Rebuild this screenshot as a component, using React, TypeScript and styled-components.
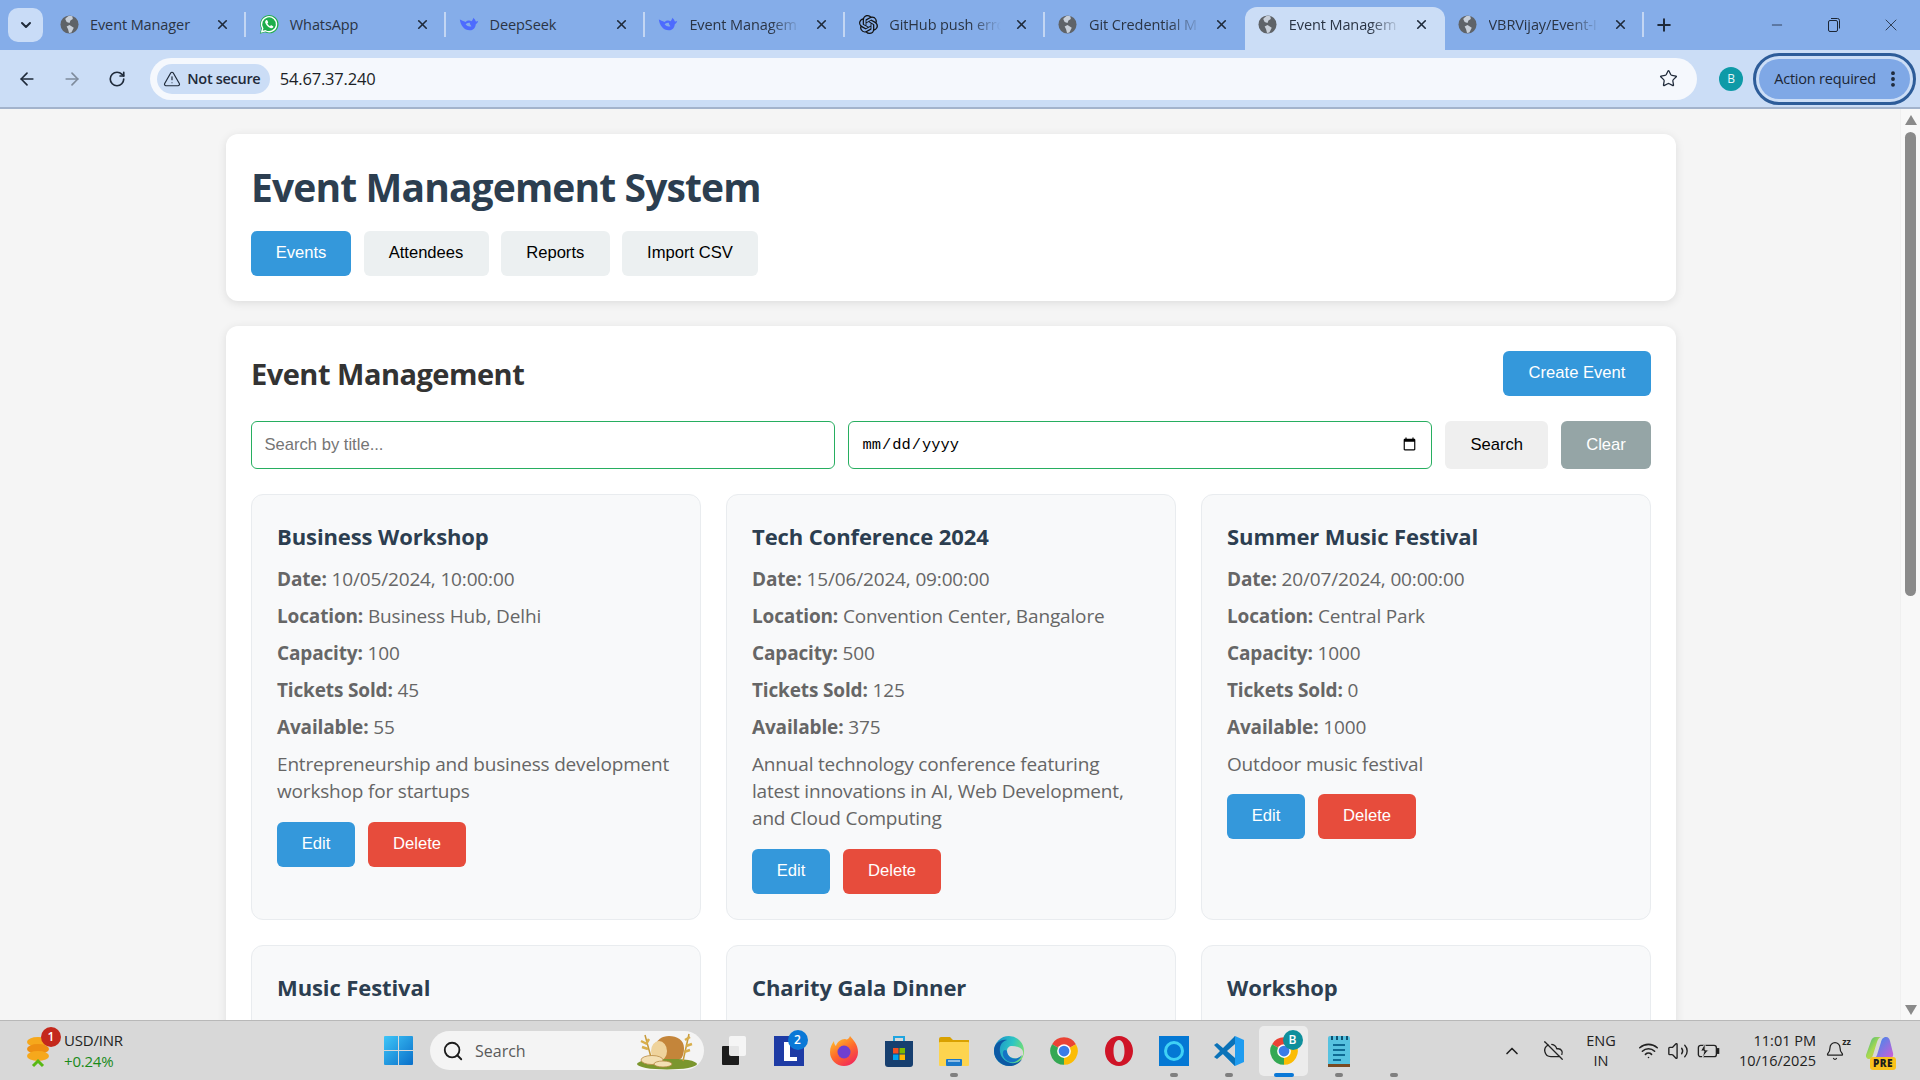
import React from "react";
import styled, { createGlobalStyle } from "styled-components";
import {
  ArrowLeft,
  ArrowRight,
  RotateCw,
  Star,
  TriangleAlert,
  ChevronDown,
  ChevronUp,
  X,
  Plus,
  Minus,
  Search as SearchGlyph,
  EllipsisVertical,
  CloudOff,
  Wifi,
  Volume2,
  Bell,
} from "lucide-react";
import { SiOpenai } from "react-icons/si";

const Global = createGlobalStyle`
  html, body { margin: 0; height: 100%; overflow: hidden; }
  body { font-family: "Open Sans", "Noto Sans", sans-serif; background: #f5f5f5; }
  * { box-sizing: border-box; }
`;

const Screen = styled.div`
  width: 1920px;
  height: 1080px;
  display: flex;
  flex-direction: column;
  overflow: hidden;
`;

/* ---------- browser chrome ---------- */

const TabStrip = styled.div`
  height: 50px;
  flex: none;
  background: #85ade9;
  display: flex;
  align-items: flex-end;
  padding-left: 8px;
  color: #1f2a3a;
`;

const TabMenu = styled.div`
  width: 35px;
  height: 34px;
  margin-bottom: 8px;
  margin-right: 3px;
  border-radius: 10px;
  background: #c9dcf7;
  display: flex;
  align-items: center;
  justify-content: center;
`;

const Tab = styled.div<{ $active?: boolean; $sep?: boolean }>`
  position: relative;
  width: 199.8px;
  height: 43px;
  padding: 0 16px 8px 13px;
  display: flex;
  align-items: center;
  border-radius: 12px 12px 0 0;
  background: ${(p) => (p.$active ? "#cbddf6" : "transparent")};

  &::after {
    content: "";
    display: ${(p) => (p.$sep ? "block" : "none")};
    position: absolute;
    right: 0;
    top: 5px;
    width: 2px;
    height: 25px;
    background: #c3d6f3;
  }
`;

const TabIcon = styled.span`
  width: 20px;
  height: 20px;
  flex: none;
  display: flex;
  align-items: center;
  justify-content: center;
`;

const TabTitle = styled.span<{ $fade?: boolean }>`
  flex: 1;
  min-width: 0;
  margin: 0 13px 0 11px;
  font-size: 14.5px;
  letter-spacing: -0.1px;
  white-space: nowrap;
  color: #2a3444;
  ${(p) =>
    p.$fade &&
    `-webkit-mask-image: linear-gradient(to right, #000 72%, transparent 100%);`}
`;

const NewTab = styled.div`
  width: 40px;
  height: 34px;
  margin-bottom: 8px;
  display: flex;
  align-items: center;
  justify-content: center;
`;

const WindowControls = styled.div`
  margin-left: auto;
  margin-right: 1px;
  height: 42px;
  display: flex;
  align-self: flex-start;
  margin-top: 4px;
`;

const WindowButton = styled.div`
  width: 57px;
  display: flex;
  align-items: center;
  justify-content: center;
`;

const Toolbar = styled.div`
  height: 59px;
  flex: none;
  background: #cbddf6;
  border-bottom: 2px solid #a3b3cc;
  display: flex;
  align-items: center;
  padding: 0 4px 0 5px;
  color: #1f2a3a;
`;

const NavButton = styled.div`
  width: 45px;
  height: 36px;
  display: flex;
  align-items: center;
  justify-content: center;
`;

const Omnibox = styled.div`
  width: 1549px;
  height: 42px;
  margin-left: 10px;
  border-radius: 21px;
  background: #f5f8fd;
  display: flex;
  align-items: center;
  padding: 0 19px 0 7px;
`;

const SecurityChip = styled.div`
  height: 30px;
  width: 113px;
  border-radius: 15px;
  background: #cbddf6;
  display: flex;
  align-items: center;
  justify-content: center;
  gap: 6px;
  padding-right: 3px;
  font-size: 14.5px;
  font-weight: 600;
  letter-spacing: -0.3px;
  color: #1f2a3a;
`;

const Url = styled.span`
  margin-left: 10px;
  flex: 1;
  font-size: 16.5px;
  letter-spacing: -0.2px;
  color: #1b1f27;
`;

const Avatar = styled.div`
  width: 24px;
  height: 24px;
  margin-left: 22px;
  border-radius: 50%;
  background: #0e9aa7;
  color: #e8f6f7;
  font-size: 12px;
  display: flex;
  align-items: center;
  justify-content: center;
`;

const ActionPill = styled.div`
  width: 163px;
  height: 52px;
  margin-left: 10px;
  border: 3px solid #2d5c99;
  border-radius: 26px;
  padding: 3px;
  background: #cbddf6;
`;

const ActionInner = styled.div`
  height: 100%;
  border-radius: 20px;
  background: #7fa8e6;
  display: flex;
  align-items: center;
  justify-content: space-between;
  padding: 0 7px 0 15px;
  font-size: 14.5px;
  letter-spacing: -0.2px;
  color: #1c2635;
`;

/* ---------- page ---------- */

const Viewport = styled.div`
  flex: 1;
  min-height: 0;
  display: flex;
`;

const Page = styled.main`
  flex: 1;
  min-width: 0;
  overflow: hidden;
  background: #f5f5f5;
  padding: 25px 0 0 2px;
`;

const Container = styled.div`
  width: 1450px;
  margin: 0 auto;
  display: flex;
  flex-direction: column;
  gap: 25px;
`;

const Panel = styled.section`
  background: #fff;
  border-radius: 12px;
  padding: 25px;
  box-shadow: 0 2px 10px rgba(0, 0, 0, 0.1);
`;

const Title = styled.h1`
  margin: 0 0 16px;
  font-size: 39px;
  line-height: 56px;
  font-weight: 700;
  letter-spacing: -0.87px;
  color: #2c3e50;
`;

const Nav = styled.nav`
  display: flex;
  gap: 12.5px;
`;

const Button = styled.button<{
  $kind?: "primary" | "danger" | "muted" | "plain" | "soft";
  $w: number;
  $tall?: boolean;
}>`
  width: ${(p) => p.$w}px;
  height: ${(p) => (p.$tall ? "48px" : "45px")};
  flex: none;
  padding: 0 0 1px;
  border: none;
  border-radius: 6px;
  font-family: "Liberation Sans", Arial, sans-serif;
  font-size: 16.6px;
  cursor: pointer;
  color: ${(p) => (p.$kind === "plain" || p.$kind === "soft" ? "#000" : "#fff")};
  background: ${(p) =>
    p.$kind === "primary"
      ? "#3498db"
      : p.$kind === "danger"
        ? "#e74c3c"
        : p.$kind === "muted"
          ? "#95a5a6"
          : p.$kind === "soft"
            ? "#efefef"
            : "#ecf0f1"};
`;

const SectionHead = styled.div`
  display: flex;
  align-items: center;
  justify-content: space-between;
  margin-bottom: 25px;
`;

const SectionTitle = styled.h2`
  margin: 0;
  font-size: 29px;
  font-weight: 700;
  letter-spacing: -0.5px;
  color: #333;
`;

const FilterRow = styled.div`
  display: flex;
  gap: 12.8px;
  margin-bottom: 25px;
`;

const Field = styled.input`
  flex: 1;
  min-width: 0;
  height: 48px;
  padding: 0 12.5px;
  border: 1px solid #27ae60;
  border-radius: 6px;
  background: #fff;
  font-family: "Liberation Sans", Arial, sans-serif;
  font-size: 16.6px;
  outline: none;
  &::placeholder {
    color: #757575;
  }
  &[type="date"] {
    font-family: "Liberation Mono", monospace;
    font-size: 15.4px;
    color: #000;
  }
`;

const Grid = styled.div`
  display: grid;
  grid-template-columns: repeat(3, 450px);
  gap: 25px;
`;

const Card = styled.article`
  min-height: 425px;
  padding: 25px;
  background: #f8f9fa;
  border: 1px solid #e9ecef;
  border-radius: 12px;
  line-height: 27.2px;
  font-size: 19px;
  color: #666;
`;

const CardTitle = styled.h3`
  margin: 0 0 12.6px;
  font-size: 22px;
  line-height: 33.2px;
  font-weight: 700;
  letter-spacing: -0.1px;
  color: #2c3e50;
`;

const Line = styled.p`
  margin: 0 0 9.75px;
  letter-spacing: -0.15px;
  strong {
    font-weight: 700;
  }
`;

const Description = styled.p`
  margin: 0 0 16.6px;
  letter-spacing: -0.18px;
`;

const Actions = styled.div`
  display: flex;
  gap: 13px;
`;

const ScrollBar = styled.div`
  width: 20px;
  flex: none;
  background: #f8f8f8;
  border-left: 1px solid #f0f0f0;
  display: flex;
  flex-direction: column;
  align-items: center;
  position: relative;
`;

const ScrollArrow = styled.div<{ $down?: boolean }>`
  position: absolute;
  ${(p) => (p.$down ? "bottom: 5px;" : "top: 6px;")}
  width: 0;
  height: 0;
  border-left: 6px solid transparent;
  border-right: 6px solid transparent;
  ${(p) => (p.$down ? "border-top: 10px solid #8a8a8a;" : "border-bottom: 10px solid #8a8a8a;")}
`;

const ScrollThumb = styled.div`
  position: absolute;
  top: 23px;
  width: 11px;
  height: 464px;
  border-radius: 6px;
  background: #8a8a8a;
`;

/* ---------- taskbar ---------- */

const Taskbar = styled.footer`
  height: 60px;
  flex: none;
  background: #d8d8d8;
  border-top: 1px solid #b8b8b8;
  display: flex;
  align-items: center;
  position: relative;
`;

const Widget = styled.div`
  width: 371px;
  flex: none;
  padding-left: 25px;
  display: flex;
  align-items: center;
  gap: 3px;
`;

const CoinBox = styled.div`
  position: relative;
  width: 36px;
  height: 40px;
`;

const Badge = styled.span<{ $color: string }>`
  position: absolute;
  top: -4px;
  right: 0;
  width: 20px;
  height: 20px;
  border-radius: 50%;
  background: ${(p) => p.$color};
  color: #fff;
  font-size: 12px;
  font-weight: 600;
  display: flex;
  align-items: center;
  justify-content: center;
`;

const TaskBadge = styled(Badge)`
  right: -4px;
  top: -6px;
`;

const WidgetText = styled.div`
  font-size: 15px;
  line-height: 21px;
  color: #222;
  letter-spacing: -0.2px;
`;

const WidgetDelta = styled.div`
  color: #1a8a1a;
`;

const TaskSlot = styled.div<{ $active?: boolean; $running?: boolean }>`
  position: relative;
  width: 55px;
  height: 50px;
  flex: none;
  display: flex;
  align-items: center;
  justify-content: center;

  ${(p) =>
    p.$active &&
    `&::before {
      content: "";
      position: absolute;
      left: 3px;
      right: 3px;
      top: 0;
      bottom: 0;
      border-radius: 5px;
      background: #ececec;
    }`}

  &::after {
    content: "";
    display: ${(p) => (p.$running || p.$active ? "block" : "none")};
    position: absolute;
    bottom: -1px;
    left: 50%;
    transform: translateX(-50%);
    width: ${(p) => (p.$active ? "20px" : "8px")};
    height: 4px;
    border-radius: 2px;
    background: ${(p) => (p.$active ? "#0a78d7" : "#7f7f7f")};
  }

  > * {
    position: relative;
  }
`;

const SearchPill = styled.div`
  width: 274px;
  height: 39px;
  margin: 0 2px 0 4px;
  flex: none;
  border-radius: 20px;
  background: #f4f4f4;
  display: flex;
  align-items: center;
  padding: 0 6px 0 12px;
  font-size: 16px;
  color: #5a5a5a;
  gap: 11px;
`;

const SearchLabel = styled.span`
  flex: 1;
`;

const Tray = styled.div`
  position: absolute;
  right: 12px;
  top: 0;
  bottom: 0;
  width: 420px;
  display: flex;
  align-items: center;
  color: #222;
`;

const TraySlot = styled.div<{ $w: number }>`
  width: ${(p) => p.$w}px;
  flex: none;
  display: flex;
  align-items: center;
  justify-content: center;
  text-align: center;
`;

const TrayText = styled.div<{ $right?: boolean }>`
  font-size: 14.5px;
  line-height: 20px;
  text-align: ${(p) => (p.$right ? "right" : "center")};
  color: #222;
  width: 100%;
`;

/* ---------- drawn icons ---------- */

const Globe = () => (
  <svg width="19" height="19" viewBox="0 0 20 20">
    <circle cx="10" cy="10" r="9.5" fill="#5f6368" />
    <path d="M10 .8c-2 .7-3.500 2-4.500 3.500l1.500 3 3 1 1-2.500 2.500-1.500-.5-3A9 9 0 0 0 10 .8z" fill="#c8cfd9" />
    <path d="M10 10.500l-3 1.500 1.500 3 1 4 2.500-.5 2.500-5z" fill="#c8cfd9" />
  </svg>
);

const WhatsApp = () => (
  <svg width="21" height="21" viewBox="0 0 24 24">
    <path d="M1 23l1.700-6.200A11 11 0 1 1 7.200 21.300z" fill="#1fae4b" />
    <path d="M3.300 20.700l1.200-4.200A9 9 0 1 1 7.700 19.500z" fill="#1fae4b" stroke="#fff" strokeWidth="1.600" />
    <path d="M8.500 6.800c-1 .8-1.400 2-.9 3.400 1 2.700 3.400 5 6.100 6 1.400.5 2.700.1 3.400-1 .3-.5.2-1-.2-1.200l-2-1c-.4-.2-.8-.1-1 .2l-.6.800c-1.300-.5-2.700-1.900-3.300-3.200l.7-.7c.3-.3.4-.7.2-1L9.900 7c-.3-.5-.9-.5-1.400-.2z" fill="#fff" />
  </svg>
);

const Whale = () => (
  <svg width="22" height="17" viewBox="0 0 24 18">
    <path
      d="M1 3c2 1 4 2 7 3 2-2 5-2 7-1 1-1 2-2 2-4 1 1 2.500 2 3 4 1 .5 2 .5 3-.5 0 2.500-2 3.500-3 4.500 0 4-3 7-7 7C6 16 2 10 1 3z"
      fill="#4d6bfe"
    />
    <path d="M8 9c2 2 4 3 7 2-1-1-2-2-2-4-2-.5-4 .5-5 2z" fill="#85ade9" />
  </svg>
);

const Restore = () => (
  <svg width="14" height="16" viewBox="0 0 14 16" fill="none" stroke="#1c2635" strokeWidth="1">
    <rect x="1.500" y="3.500" width="9" height="11" rx="1.500" />
    <path d="M4 1.500h6.500a2 2 0 0 1 2 2v8" />
  </svg>
);

const Coins = () => (
  <svg width="32" height="38" viewBox="0 0 32 38">
    <ellipse cx="13" cy="11" rx="11" ry="5" fill="#f6a81c" />
    <ellipse cx="13" cy="18" rx="11" ry="5" fill="#ee8f12" />
    <ellipse cx="13" cy="25" rx="11" ry="5" fill="#f6a81c" />
    <path d="M8 35l5-5 5 5" fill="none" stroke="#58b814" strokeWidth="3" />
  </svg>
);

const WinLogo = () => (
  <svg width="29" height="29" viewBox="0 0 29 29">
    <defs>
      <linearGradient id="win" x1="0" y1="0" x2="1" y2="1">
        <stop offset="0" stopColor="#3ec6f8" />
        <stop offset="1" stopColor="#0a6fc9" />
      </linearGradient>
    </defs>
    <path d="M1 0h13v14H0V1a1 1 0 0 1 1-1zM15 0h13a1 1 0 0 1 1 1v13H15zM0 15h14v14H1a1 1 0 0 1-1-1zM15 15h14v13a1 1 0 0 1-1 1H15z" fill="url(#win)" />
  </svg>
);

const Bread = () => (
  <svg width="62" height="40" viewBox="0 0 62 40">
    <ellipse cx="31" cy="33" rx="30" ry="5.500" fill="#7b962e" />
    <path d="M9 4l7 26M53 3l-6 27" stroke="#c79a3a" strokeWidth="1.500" fill="none" />
    <path d="M5 10l6 3M6 16l6 2M13 8l-3 5M49 9l5-3M50 15l6-2M48 21l6-2" stroke="#d8ae4c" strokeWidth="2.500" fill="none" />
    <path d="M20 28V15c0-6 6-10 13-10 8 0 15 4 15 12 0 6-2 11-4 11z" fill="#c4853a" />
    <ellipse cx="23" cy="20" rx="8" ry="10" fill="#efd39c" />
    <ellipse cx="16" cy="29" rx="11" ry="4.500" fill="#f3dfb4" stroke="#b98a45" strokeWidth="0.800" />
    <ellipse cx="27" cy="33" rx="9" ry="3" fill="#f3dfb4" stroke="#b98a45" strokeWidth="0.800" />
  </svg>
);

const TaskView = () => (
  <svg width="24" height="29" viewBox="0 0 24 29">
    <rect x="0" y="10" width="17" height="19" rx="1" fill="#1c1c1c" />
    <rect x="7" y="0" width="17" height="20" rx="2" fill="#f7f7f7" opacity="0.92" />
  </svg>
);

const AppL = () => (
  <svg width="30" height="30" viewBox="0 0 30 30">
    <rect width="30" height="30" fill="#1e3ba5" />
    <path d="M10 6h6v15h7v4H10z" fill="#fff" />
  </svg>
);

const Firefox = () => (
  <svg width="30" height="32" viewBox="0 0 30 32">
    <defs>
      <linearGradient id="ff" x1="0.2" y1="0" x2="0.8" y2="1">
        <stop offset="0" stopColor="#ffc329" />
        <stop offset="0.5" stopColor="#ff6a2b" />
        <stop offset="1" stopColor="#f0245e" />
      </linearGradient>
    </defs>
    <path d="M21 1c3 4 8 8 8 16a14 14 0 0 1-28 0C1 12 3 9 5 6c0 3 1 4 2 5 1-4 5-7 9-7 2 1 4 0 5-3z" fill="url(#ff)" />
    <circle cx="15" cy="17" r="6.500" fill="#6f3fd0" />
  </svg>
);

const Store = () => (
  <svg width="28" height="32" viewBox="0 0 28 32">
    <path d="M9 6V2h10v4" fill="none" stroke="#1fa5e0" strokeWidth="2" />
    <path d="M0 6h28v23a3 3 0 0 1-3 3H3a3 3 0 0 1-3-3z" fill="#173f6f" />
    <rect x="8" y="13" width="5.500" height="5.500" fill="#f25022" />
    <rect x="14.500" y="13" width="5.500" height="5.500" fill="#7fba00" />
    <rect x="8" y="19.500" width="5.500" height="5.500" fill="#00a4ef" />
    <rect x="14.500" y="19.500" width="5.500" height="5.500" fill="#ffb900" />
  </svg>
);

const Folder = () => (
  <svg width="30" height="30" viewBox="0 0 30 30">
    <path d="M0 3a2 2 0 0 1 2-2h9l3 3h16v6H0z" fill="#d9a100" />
    <rect y="6" width="30" height="24" rx="1" fill="#fdd44f" />
    <rect x="7" y="23" width="16" height="7" rx="1" fill="#1b78c9" />
    <rect x="9" y="24" width="12" height="2" fill="#fff" opacity="0.5" />
  </svg>
);

const Edge = () => (
  <svg width="30" height="30" viewBox="0 0 30 30">
    <defs>
      <linearGradient id="edge" x1="0" y1="0.3" x2="1" y2="0.6">
        <stop offset="0" stopColor="#1a8fc9" />
        <stop offset="0.55" stopColor="#2cc5c4" />
        <stop offset="1" stopColor="#7ee06a" />
      </linearGradient>
    </defs>
    <circle cx="15" cy="15" r="15" fill="url(#edge)" />
    <path d="M0 15C0 7 7 3 13 4 8 5 5 10 6 16c1 7 8 12 15 11 3-.5 5-2 7-4-2 4-7 7-13 7C7 30 0 23 0 15z" fill="#0c59a4" />
    <path d="M29 19c-3 3-7 4-10 3-4-1-6-4-6-7 0-3 2-5 5-5 5 0 11 2 11 6z" fill="#d8d8d8" />
    <path d="M13 15c0 4 3 7 7 7.500 3 .4 6-1 8-3.500-2 5-7 8-12 7-5-1-8-6-7-10 .5-2 2-3 4-1z" fill="#1473c4" />
  </svg>
);

const Chrome = () => (
  <svg width="30" height="30" viewBox="0 0 24 24">
    <path d="M12 12L2.470 6.500A11 11 0 0 1 21.530 6.500z" fill="#ea4335" />
    <path d="M12 12L21.530 6.500A11 11 0 0 1 12 23z" fill="#fbbc04" />
    <path d="M12 12L12 23A11 11 0 0 1 2.470 6.500z" fill="#34a853" />
    <circle cx="12" cy="12" r="5.500" fill="#fff" />
    <circle cx="12" cy="12" r="4.300" fill="#3a7ce8" />
  </svg>
);

const Opera = () => (
  <svg width="30" height="32" viewBox="0 0 30 32">
    <path
      fillRule="evenodd"
      d="M15 1c8 0 14 6.700 14 15s-6 15-14 15S1 24.300 1 16 7 1 15 1zm0 4c-3.500 0-5.500 5-5.500 11s2 11 5.500 11 5.500-5 5.500-11S18.500 5 15 5z"
      fill="#cf1427"
    />
  </svg>
);

const Alexa = () => (
  <svg width="30" height="30" viewBox="0 0 30 30">
    <rect width="30" height="30" fill="#0478d4" />
    <circle cx="15" cy="15" r="8.500" fill="none" stroke="#3fd1f5" strokeWidth="3" />
  </svg>
);

const VsCode = () => (
  <svg width="30" height="30" viewBox="0 0 30 30">
    <path d="M21 0l9 4v22l-9 4-12-12 5-4z" fill="#1f9cf0" />
    <path d="M21 0v30L9 18 3 23 0 21l6-6-6-6 3-2 6 5z" fill="#0a72b8" />
    <path d="M21 8l-8 7 8 7z" fill="#d8d8d8" />
  </svg>
);

const Notepad = () => (
  <svg width="24" height="32" viewBox="0 0 24 32">
    <rect width="22" height="30" x="1" y="1" rx="2" fill="#56c2e0" />
    <rect x="1" y="29" width="22" height="3" fill="#7a4a22" />
    <path d="M6 10h12M6 15h12M6 20h12M6 25h8" stroke="#0f6b94" strokeWidth="2" />
    <path d="M5 1v4M10 1v4M15 1v4M20 1v4" stroke="#10506f" strokeWidth="2" />
  </svg>
);

const Battery = () => (
  <svg width="23" height="18" viewBox="0 0 20 16" fill="none" stroke="#222" strokeWidth="1.200">
    <rect x="1" y="3" width="16" height="10" rx="2" />
    <rect x="17.500" y="6" width="1.500" height="4" fill="#222" />
    <path d="M7 1L3 8h3l-1.500 6L10 7H7z" fill="#222" stroke="#d8d8d8" strokeWidth="0.800" />
  </svg>
);

const Copilot = () => (
  <svg width="30" height="27" viewBox="0 0 30 27">
    <defs>
      <linearGradient id="copA" x1="0" y1="0" x2="1" y2="1">
        <stop offset="0" stopColor="#38b48a" />
        <stop offset="0.5" stopColor="#a8d94f" />
        <stop offset="1" stopColor="#f5b43a" />
      </linearGradient>
      <linearGradient id="copB" x1="0" y1="0" x2="1" y2="1">
        <stop offset="0" stopColor="#2e8ff0" />
        <stop offset="1" stopColor="#d45cd4" />
      </linearGradient>
    </defs>
    <path d="M2 20L7 6c.7-2 2-4 5-4h6c-3 0-4 2-5 5l-4 13c-.7 2.500-2.500 4-4 4-2 0-3.500-2-3-4z" fill="url(#copA)" />
    <path d="M10 24c-1 0 2-1 3-4l4-13c.7-2.500 2-5 5-5 2.500 0 3.500 2 4 4l3 12c.7 3-1 6-4 6z" fill="url(#copB)" />
  </svg>
);

const PreBadge = styled.span`
  position: absolute;
  left: 6px;
  bottom: -3px;
  padding: 0 3px;
  height: 13px;
  border-radius: 3px;
  background: #f9c21c;
  color: #1c1c1c;
  font-size: 10px;
  font-weight: 800;
  line-height: 13px;
  letter-spacing: 0.5px;
`;

const CopilotBox = styled.div`
  position: relative;
  width: 30px;
  height: 32px;
`;

const IconBadgeHolder = styled.div`
  position: relative;
  display: flex;
`;

const SnoozeMark = styled.span`
  position: absolute;
  top: -6px;
  right: -6px;
  font-size: 9px;
  font-weight: 700;
`;

/* ---------- data ---------- */

const tabs = [
  { title: "Event Manager", icon: <Globe />, sep: true },
  { title: "WhatsApp", icon: <WhatsApp />, sep: true },
  { title: "DeepSeek", icon: <Whale />, sep: true },
  { title: "Event Managem", icon: <Whale />, sep: true, fade: true },
  { title: "GitHub push erro", icon: <SiOpenai size={19} color="#111" />, sep: true, fade: true },
  { title: "Git Credential M", icon: <Globe />, fade: true },
  { title: "Event Managem", icon: <Globe />, active: true, fade: true },
  { title: "VBRVijay/Event-I", icon: <Globe />, sep: true, fade: true },
];

const firstRow = [
  {
    title: "Business Workshop",
    date: "10/05/2024, 10:00:00",
    location: "Business Hub, Delhi",
    capacity: 100,
    sold: 45,
    available: 55,
    description: "Entrepreneurship and business development workshop for startups",
  },
  {
    title: "Tech Conference 2024",
    date: "15/06/2024, 09:00:00",
    location: "Convention Center, Bangalore",
    capacity: 500,
    sold: 125,
    available: 375,
    description: "Annual technology conference featuring latest innovations in AI, Web Development, and Cloud Computing",
  },
  {
    title: "Summer Music Festival",
    date: "20/07/2024, 00:00:00",
    location: "Central Park",
    capacity: 1000,
    sold: 0,
    available: 1000,
    description: "Outdoor music festival",
  },
];

const secondRow = ["Music Festival", "Charity Gala Dinner", "Workshop"];

export default function App() {
  return (
    <Screen>
      <Global />
      <TabStrip>
        <TabMenu>
          <ChevronDown size={16} strokeWidth={3} />
        </TabMenu>
        {tabs.map((t, i) => (
          <Tab key={i} $active={t.active} $sep={t.sep}>
            <TabIcon>{t.icon}</TabIcon>
            <TabTitle $fade={t.fade}>{t.title}</TabTitle>
            <X size={15} strokeWidth={2.6} />
          </Tab>
        ))}
        <NewTab>
          <Plus size={20} strokeWidth={2.4} />
        </NewTab>
        <WindowControls>
          <WindowButton>
            <Minus size={16} strokeWidth={1.2} />
          </WindowButton>
          <WindowButton>
            <Restore />
          </WindowButton>
          <WindowButton>
            <X size={20} strokeWidth={1} />
          </WindowButton>
        </WindowControls>
      </TabStrip>

      <Toolbar>
        <NavButton>
          <ArrowLeft size={20} strokeWidth={2} />
        </NavButton>
        <NavButton>
          <ArrowRight size={20} strokeWidth={2} color="#7f8b9c" />
        </NavButton>
        <NavButton>
          <RotateCw size={18} strokeWidth={2.2} />
        </NavButton>
        <Omnibox>
          <SecurityChip>
            <TriangleAlert size={18} strokeWidth={1.6} />
            Not secure
          </SecurityChip>
          <Url>54.67.37.240</Url>
          <Star size={19} strokeWidth={1.6} />
        </Omnibox>
        <Avatar>B</Avatar>
        <ActionPill>
          <ActionInner>
            Action required
            <EllipsisVertical size={20} strokeWidth={2.6} />
          </ActionInner>
        </ActionPill>
      </Toolbar>

      <Viewport>
        <Page>
          <Container>
            <Panel>
              <Title>Event Management System</Title>
              <Nav>
                <Button $kind="primary" $w={100}>Events</Button>
                <Button $kind="plain" $w={125}>Attendees</Button>
                <Button $kind="plain" $w={108.5}>Reports</Button>
                <Button $kind="plain" $w={136}>Import CSV</Button>
              </Nav>
            </Panel>
            <Panel>
              <SectionHead>
                <SectionTitle>Event Management</SectionTitle>
                <Button $kind="primary" $w={148}>Create Event</Button>
              </SectionHead>
              <FilterRow>
                <Field type="text" placeholder="Search by title..." />
                <Field type="date" />
                <Button $kind="soft" $w={103} $tall>Search</Button>
                <Button $kind="muted" $w={90} $tall>Clear</Button>
              </FilterRow>
              <Grid>
                {firstRow.map((e) => (
                  <Card key={e.title}>
                    <CardTitle>{e.title}</CardTitle>
                    <Line><strong>Date:</strong> {e.date}</Line>
                    <Line><strong>Location:</strong> {e.location}</Line>
                    <Line><strong>Capacity:</strong> {e.capacity}</Line>
                    <Line><strong>Tickets Sold:</strong> {e.sold}</Line>
                    <Line><strong>Available:</strong> {e.available}</Line>
                    <Description>{e.description}</Description>
                    <Actions>
                      <Button $kind="primary" $w={78}>Edit</Button>
                      <Button $kind="danger" $w={98}>Delete</Button>
                    </Actions>
                  </Card>
                ))}
                {secondRow.map((title) => (
                  <Card key={title}>
                    <CardTitle>{title}</CardTitle>
                  </Card>
                ))}
              </Grid>
            </Panel>
          </Container>
        </Page>
        <ScrollBar>
          <ScrollArrow />
          <ScrollThumb />
          <ScrollArrow $down />
        </ScrollBar>
      </Viewport>

      <Taskbar>
        <Widget>
          <CoinBox>
            <Coins />
            <Badge $color="#c4281c">1</Badge>
          </CoinBox>
          <WidgetText>
            USD/INR
            <WidgetDelta>+0.24%</WidgetDelta>
          </WidgetText>
        </Widget>
        <TaskSlot><WinLogo /></TaskSlot>
        <SearchPill>
          <SearchGlyph size={22} color="#1c1c1c" strokeWidth={2} />
          <SearchLabel>Search</SearchLabel>
          <Bread />
        </SearchPill>
        <TaskSlot><TaskView /></TaskSlot>
        <TaskSlot>
          <IconBadgeHolder>
            <AppL />
            <TaskBadge $color="#0a78d7">2</TaskBadge>
          </IconBadgeHolder>
        </TaskSlot>
        <TaskSlot><Firefox /></TaskSlot>
        <TaskSlot><Store /></TaskSlot>
        <TaskSlot $running><Folder /></TaskSlot>
        <TaskSlot><Edge /></TaskSlot>
        <TaskSlot><Chrome /></TaskSlot>
        <TaskSlot><Opera /></TaskSlot>
        <TaskSlot $running><Alexa /></TaskSlot>
        <TaskSlot $running><VsCode /></TaskSlot>
        <TaskSlot $active>
          <IconBadgeHolder>
            <Chrome />
            <TaskBadge $color="#0e8f9c">B</TaskBadge>
          </IconBadgeHolder>
        </TaskSlot>
        <TaskSlot $running><Notepad /></TaskSlot>
        <TaskSlot $running />
        <Tray>
          <TraySlot $w={48}><ChevronUp size={20} /></TraySlot>
          <TraySlot $w={34}><CloudOff size={21} strokeWidth={1.5} /></TraySlot>
          <TraySlot $w={62}><TrayText>ENG<br />IN</TrayText></TraySlot>
          <TraySlot $w={32}><Wifi size={21} strokeWidth={1.8} /></TraySlot>
          <TraySlot $w={28}><Volume2 size={22} strokeWidth={1.5} /></TraySlot>
          <TraySlot $w={32}><Battery /></TraySlot>
          <TraySlot $w={92}><TrayText $right>11:01 PM<br />10/16/2025</TrayText></TraySlot>
          <TraySlot $w={38}>
            <IconBadgeHolder>
              <Bell size={20} strokeWidth={1.5} />
              <SnoozeMark>zz</SnoozeMark>
            </IconBadgeHolder>
          </TraySlot>
          <TraySlot $w={50}>
            <CopilotBox>
              <Copilot />
              <PreBadge>PRE</PreBadge>
            </CopilotBox>
          </TraySlot>
        </Tray>
      </Taskbar>
    </Screen>
  );
}
